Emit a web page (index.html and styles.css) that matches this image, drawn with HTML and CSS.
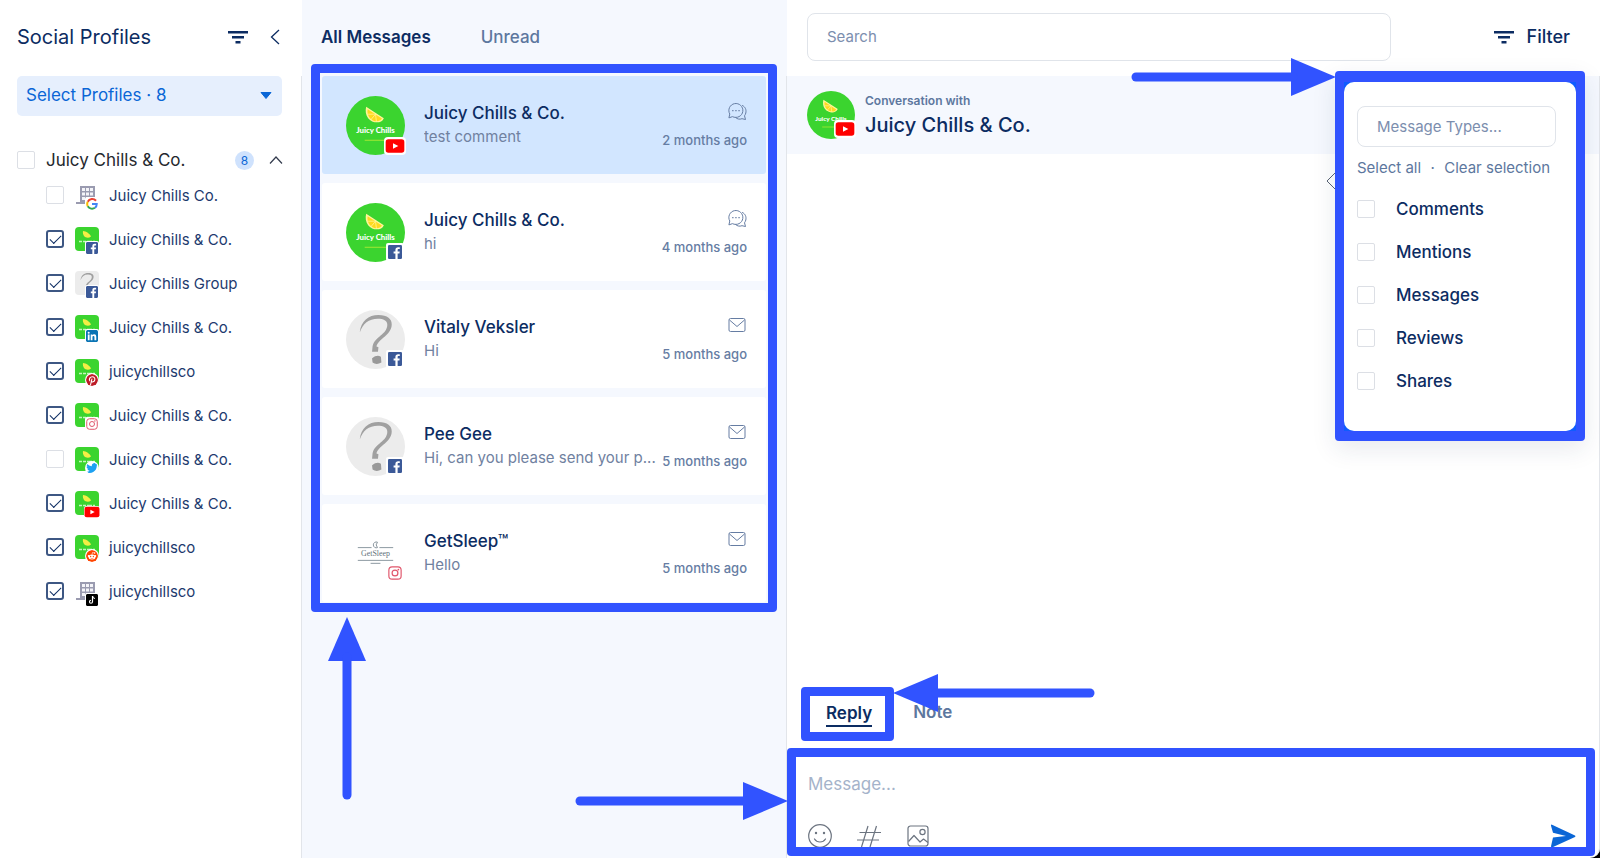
FILE: index.html
```html
<!DOCTYPE html>
<html lang="en">
<head>
<meta charset="utf-8">
<meta name="viewport" content="width=device-width, initial-scale=1">
<title>Social Inbox</title>
<link rel="stylesheet" href="styles.css">
</head>
<body>
<svg class="sprite" aria-hidden="true">
  <symbol id="filter" viewBox="0 0 20 14"><path d="M0 1h20v2.400H0zM4 6h12v2.400H4zM7.500 11h5v2.400h-5z" fill="currentColor"/></symbol>
  <symbol id="lime" viewBox="0 0 60 60">
    <rect width="60" height="60" fill="#3bd42f"/>
    <path d="M20.500 11L38.500 22.500C36 28.500 27 28 22.500 22.500 20 19.500 19.500 15 20.500 11z" fill="#fff59a"/>
    <path d="M22 13.500l14.500 9.500C34 27 27.500 26.500 24 22c-2-2.500-2.500-5.500-2-8.500z" fill="#ffd91f"/>
    <path d="M30 18.500l-8 0M30 18.500l-5 6M30 18.500l1 8" stroke="#fff59a" stroke-width=".8" fill="none"/>
  </symbol>
  <symbol id="lime-small" viewBox="0 0 24 24">
    <rect width="24" height="24" fill="#3bd42f"/>
    <path d="M8 4c3 0 7 3 8 5.500-2 1.800-5.500 1.500-7-.5-1-1.500-1.300-3.500-1-5z" fill="#f3ee45"/>
    <path d="M4 14.500h3m1 0h3m1 0h5m1 0h2" stroke="#c5f5bf" stroke-width="1.500"/>
  </symbol>
  <symbol id="unknown" viewBox="0 0 60 60">
    <rect width="60" height="60" fill="#ececec"/>
    <path d="M14 23C15 11 23 5 33 5c9 0 14 4 13.500 10C46 26 33 29 31 37l2 1-.5 4.500h-6L27 37C29 27 42 25 42 15c0-4-4-6-9.500-6C23 9 17 14 14 23z" fill="#a0a0a0"/>
    <path d="M26.500 49q5-4 9-1.500l.5 6q-5 3-9 0z" fill="#999"/>
  </symbol>
  <symbol id="building" viewBox="0 0 24 24">
    <path d="M5 3h15v18H8v-2H5zM1 19h8v2H1z" fill="#9a9bb0"/>
    <path d="M7 5h3v3H7zm4 0h3v3h-3zm4 0h3v3h-3zM7 9.500h3v3H7zm4 0h3v3h-3zm4 0h3v3h-3zM7 14h3v3H7zm4 0h3v3h-3zm4 0h3v3h-3z" fill="#f4f4f8"/>
  </symbol>
  <symbol id="google" viewBox="0 0 24 24">
    <path d="M20 5.500A10 10 0 0 0 3.500 7.500" fill="none" stroke="#ea4335" stroke-width="4"/>
    <path d="M3.500 7.500a10 10 0 0 0 0 9" fill="none" stroke="#fbbc05" stroke-width="4"/>
    <path d="M3.500 16.500a10 10 0 0 0 14.500 3" fill="none" stroke="#34a853" stroke-width="4"/>
    <path d="M12 12h9.500c0 3-1 5.500-3.500 7.500" fill="none" stroke="#4285f4" stroke-width="4"/>
  </symbol>
  <symbol id="facebook" viewBox="0 0 24 24">
    <rect width="24" height="24" rx="2" fill="#3b5998"/>
    <path d="M16.500 24v-9.300h3.100l.5-3.600h-3.600V8.800c0-1 .3-1.800 1.800-1.800h1.900V3.800c-.3 0-1.500-.1-2.800-.1-2.800 0-4.700 1.700-4.700 4.800v2.600H9.600v3.600h3.100V24z" fill="#fff"/>
  </symbol>
  <symbol id="linkedin" viewBox="0 0 24 24">
    <rect width="24" height="24" rx="3" fill="#0a74b4"/>
    <path d="M3.600 9h3.600v11.400H3.600zM5.400 3.400a2 2 0 1 1 0 4.100 2 2 0 0 1 0-4.100zM9.400 9h3.400v1.600c.6-1 1.800-1.900 3.500-1.900 3.600 0 4.200 2.400 4.200 5.500v6.200h-3.600v-5.500c0-1.400 0-3-1.900-3s-2.100 1.400-2.100 2.900v5.600H9.400z" fill="#fff"/>
  </symbol>
  <symbol id="pinterest" viewBox="0 0 24 24">
    <circle cx="12" cy="12" r="12" fill="#bd1c27"/>
    <path d="M9 22l2.800-12M7.500 13.500C5.500 10 8 5.500 12.500 5.500c4 0 6 3 5 6.500-1 4-5.500 5-6.800 2.500" fill="none" stroke="#fff" stroke-width="2.200" stroke-linecap="round"/>
  </symbol>
  <symbol id="instagram" viewBox="0 0 24 24">
    <g fill="none" stroke="#e0566b" stroke-width="2"><rect x="1.500" y="1.500" width="21" height="21" rx="5.500"/><circle cx="12" cy="12" r="5"/></g>
    <circle cx="17.800" cy="6.200" r="1.500" fill="#e0566b"/>
  </symbol>
  <symbol id="twitter" viewBox="0 0 24 24">
    <path d="M24 4.600a10 10 0 0 1-2.800.8 5 5 0 0 0 2.100-2.700 10 10 0 0 1-3.100 1.200 4.900 4.900 0 0 0-8.400 4.500A14 14 0 0 1 1.700 3.100a4.900 4.900 0 0 0 1.500 6.600 4.900 4.900 0 0 1-2.200-.6 4.900 4.900 0 0 0 3.900 4.900 5 5 0 0 1-2.200.1 4.900 4.900 0 0 0 4.600 3.400A9.900 9.900 0 0 1 0 19.500 14 14 0 0 0 21.500 7.100 10 10 0 0 0 24 4.600z" fill="#1da1f2"/>
  </symbol>
  <symbol id="youtube" viewBox="0 0 30 22">
    <rect x="1" y="1" width="28" height="20" rx="4" fill="#f00"/><path d="M12 7l8 4-8 4z" fill="#fff"/>
  </symbol>
  <symbol id="reddit" viewBox="0 0 24 24">
    <circle cx="12" cy="12" r="12" fill="#ff4500"/>
    <path d="M12 9l1-4 3.500.8" fill="none" stroke="#fff" stroke-width="1.200"/>
    <circle cx="17.200" cy="6" r="1.500" fill="#fff"/><circle cx="5.500" cy="12" r="2" fill="#fff"/><circle cx="18.500" cy="12" r="2" fill="#fff"/>
    <ellipse cx="12" cy="14" rx="7" ry="5" fill="#fff"/>
    <circle cx="9.300" cy="13" r="1.300" fill="#ff4500"/><circle cx="14.700" cy="13" r="1.300" fill="#ff4500"/>
    <path d="M9 16.300q3 1.800 6 0" fill="none" stroke="#ff4500"/>
  </symbol>
  <symbol id="tiktok" viewBox="0 0 24 24">
    <rect width="24" height="24" rx="2" fill="#000"/>
    <path d="M13 4v11.500a3 3 0 1 1-3-3" fill="none" stroke="#fff" stroke-width="2.400"/>
    <path d="M13 4c.3 3 2 4.700 5 5" fill="none" stroke="#fff" stroke-width="2.400"/>
  </symbol>
  <symbol id="comments" viewBox="0 0 20 20">
    <g fill="none" stroke="currentColor" stroke-linecap="round" stroke-linejoin="round">
      <path d="M2 16.500l.8-3.500a7 7 0 1 1 3 2.800z"/>
      <path d="M15.500 4.500c3 1.500 4 4.500 3.300 7.500-.2 1-.7 2-1.300 2.800l1 3.700-3.500-.8c-2.500 1-5 .3-6.500-1.200"/>
    </g>
    <path d="M5.200 9h1.300v1.200H5.200zm3.100 0h1.300v1.200H8.300zm3.100 0h1.300v1.200h-1.300z" fill="currentColor"/>
  </symbol>
  <symbol id="mail" viewBox="0 0 20 20">
    <g fill="none" stroke="currentColor" stroke-linejoin="round"><rect x="2" y="3.500" width="16" height="13" rx="1.500"/><path d="M2.500 5l7.500 6.500L17.500 5"/></g>
  </symbol>
</svg>

<div class="app">
  <aside class="sidebar">
    <header class="bar sidebar-bar">
      <h1 class="title">Social Profiles</h1>
      <button class="icon-btn" type="button" aria-label="Filter profiles"><svg width="20" height="14"><use href="#filter"/></svg></button>
      <button class="icon-btn" type="button" aria-label="Collapse"><svg width="10" height="16" viewBox="0 0 10 16"><path d="M9 1L1.500 8 9 15" fill="none" stroke="currentColor" stroke-width="1.300"/></svg></button>
    </header>
    <div class="sidebar-body">
      <div class="picker">
        <select class="picker-select" aria-label="Select profiles"><option>Select Profiles · 8</option></select>
        <svg class="picker-caret" width="12" height="7" viewBox="0 0 12 7" aria-hidden="true"><path d="M1 .5h10L6 6.500z" fill="#0a66d6" stroke="#0a66d6" stroke-linejoin="round"/></svg>
      </div>
      <div class="group">
        <label class="group-label"><input class="check" type="checkbox">Juicy Chills &amp; Co.</label>
        <span class="count">8</span>
        <button class="icon-btn" type="button" aria-label="Collapse group"><svg width="14" height="8" viewBox="0 0 14 8"><path d="M1 7.500L7 1l6 6.500" fill="none" stroke="#333b4d" stroke-width="1.200"/></svg></button>
      </div>
      <ul class="profiles">
        <li><label class="profile"><input class="check" type="checkbox"><span class="thumb"><svg class="thumb-img"><use href="#building"/></svg><svg class="net"><use href="#google"/></svg></span>Juicy Chills Co.</label></li>
        <li><label class="profile"><input class="check" type="checkbox" checked><span class="thumb"><svg class="thumb-img"><use href="#lime-small"/></svg><svg class="net"><use href="#facebook"/></svg></span>Juicy Chills &amp; Co.</label></li>
        <li><label class="profile"><input class="check" type="checkbox" checked><span class="thumb"><svg class="thumb-img"><use href="#unknown"/></svg><svg class="net"><use href="#facebook"/></svg></span>Juicy Chills Group</label></li>
        <li><label class="profile"><input class="check" type="checkbox" checked><span class="thumb"><svg class="thumb-img"><use href="#lime-small"/></svg><svg class="net"><use href="#linkedin"/></svg></span>Juicy Chills &amp; Co.</label></li>
        <li><label class="profile"><input class="check" type="checkbox" checked><span class="thumb"><svg class="thumb-img"><use href="#lime-small"/></svg><svg class="net round"><use href="#pinterest"/></svg></span>juicychillsco</label></li>
        <li><label class="profile"><input class="check" type="checkbox" checked><span class="thumb"><svg class="thumb-img"><use href="#lime-small"/></svg><svg class="net"><use href="#instagram"/></svg></span>Juicy Chills &amp; Co.</label></li>
        <li><label class="profile"><input class="check" type="checkbox"><span class="thumb"><svg class="thumb-img"><use href="#lime-small"/></svg><svg class="net round"><use href="#twitter"/></svg></span>Juicy Chills &amp; Co.</label></li>
        <li><label class="profile"><input class="check" type="checkbox" checked><span class="thumb"><svg class="thumb-img"><use href="#lime-small"/></svg><svg class="net wide"><use href="#youtube"/></svg></span>Juicy Chills &amp; Co.</label></li>
        <li><label class="profile"><input class="check" type="checkbox" checked><span class="thumb"><svg class="thumb-img"><use href="#lime-small"/></svg><svg class="net round"><use href="#reddit"/></svg></span>juicychillsco</label></li>
        <li><label class="profile"><input class="check" type="checkbox" checked><span class="thumb"><svg class="thumb-img"><use href="#building"/></svg><svg class="net"><use href="#tiktok"/></svg></span>juicychillsco</label></li>
      </ul>
    </div>
  </aside>

  <section class="inbox">
    <header class="bar inbox-bar">
      <button class="inbox-tab active" type="button">All Messages</button>
      <button class="inbox-tab" type="button">Unread</button>
    </header>
    <div class="inbox-body">
      <div class="threads">
        <button class="card selected" type="button">
          <span class="avatar"><svg class="avatar-img" viewBox="0 0 60 60"><use href="#lime"/><text class="logo-text" x="30" y="38">Juicy Chills</text><path d="M19 45h22" stroke="#a6e834"/></svg><svg class="net wide"><use href="#youtube"/></svg></span>
          <span class="card-text"><span class="name">Juicy Chills &amp; Co.</span><span class="snippet">test comment</span></span>
          <span class="meta"><svg width="20" height="20"><use href="#comments"/></svg><time>2 months ago</time></span>
        </button>
        <button class="card" type="button">
          <span class="avatar"><svg class="avatar-img" viewBox="0 0 60 60"><use href="#lime"/><text class="logo-text" x="30" y="38">Juicy Chills</text><path d="M19 45h22" stroke="#a6e834"/></svg><svg class="net"><use href="#facebook"/></svg></span>
          <span class="card-text"><span class="name">Juicy Chills &amp; Co.</span><span class="snippet">hi</span></span>
          <span class="meta"><svg width="20" height="20"><use href="#comments"/></svg><time>4 months ago</time></span>
        </button>
        <button class="card" type="button">
          <span class="avatar"><svg class="avatar-img"><use href="#unknown"/></svg><svg class="net"><use href="#facebook"/></svg></span>
          <span class="card-text"><span class="name">Vitaly Veksler</span><span class="snippet">Hi</span></span>
          <span class="meta"><svg width="20" height="20"><use href="#mail"/></svg><time>5 months ago</time></span>
        </button>
        <button class="card" type="button">
          <span class="avatar"><svg class="avatar-img"><use href="#unknown"/></svg><svg class="net"><use href="#facebook"/></svg></span>
          <span class="card-text"><span class="name">Pee Gee</span><span class="snippet">Hi, can you please send your p...</span></span>
          <span class="meta"><svg width="20" height="20"><use href="#mail"/></svg><time>5 months ago</time></span>
        </button>
        <button class="card" type="button">
          <span class="avatar"><svg class="avatar-img" viewBox="0 0 60 60"><path d="M12 24h14M34 24h14M12 37h36M25 40h10" stroke="#8b98a0"/><path d="M32 18.500a3 3 0 1 0 0 5.500 4 4 0 0 1 0-5.500z" fill="none" stroke="#6d7c86" stroke-width=".8"/><text class="sleep-text" x="30" y="33">GetSleep</text></svg><svg class="net"><use href="#instagram"/></svg></span>
          <span class="card-text"><span class="name">GetSleep™</span><span class="snippet">Hello</span></span>
          <span class="meta"><svg width="20" height="20"><use href="#mail"/></svg><time>5 months ago</time></span>
        </button>
        <span class="mark threads-mark"></span>
        <svg class="arrow arrow-threads" width="38" height="183" viewBox="0 0 38 183" aria-hidden="true"><path d="M19 0l19 44H0z" fill="#3153ff"/><path d="M19 40v138" stroke="#3153ff" stroke-width="9" stroke-linecap="round"/></svg>
      </div>
    </div>
  </section>

  <main class="conversation">
    <header class="bar conversation-bar">
      <input class="search" type="search" placeholder="Search" aria-label="Search">
      <div class="filter">
        <button class="filter-btn" type="button"><svg width="20" height="14" aria-hidden="true"><use href="#filter"/></svg>Filter</button>
        <form class="menu">
          <input class="menu-search" type="text" placeholder="Message Types..." aria-label="Message types">
          <div class="menu-links"><a href="#all">Select all</a><span>·</span><a href="#clear">Clear selection</a></div>
          <label class="option"><input class="check" type="checkbox">Comments</label>
          <label class="option"><input class="check" type="checkbox">Mentions</label>
          <label class="option"><input class="check" type="checkbox">Messages</label>
          <label class="option"><input class="check" type="checkbox">Reviews</label>
          <label class="option"><input class="check" type="checkbox">Shares</label>
          <svg class="arrow arrow-menu" width="205" height="38" viewBox="0 0 205 38" aria-hidden="true"><path d="M205 19l-45 19V0z" fill="#3153ff"/><path d="M5 19h157" stroke="#3153ff" stroke-width="9" stroke-linecap="round"/></svg>
        </form>
      </div>
    </header>
    <div class="conversation-body">
      <div class="who">
        <span class="avatar small"><svg class="avatar-img" viewBox="0 0 60 60"><use href="#lime"/><text class="logo-text" x="30" y="38">Juicy Chills</text><path d="M19 45h22" stroke="#a6e834"/></svg><svg class="net wide"><use href="#youtube"/></svg></span>
        <div><p class="who-hint">Conversation with</p><h2 class="who-name">Juicy Chills &amp; Co.</h2></div>
      </div>
      <div class="stream"><svg width="18" height="18" viewBox="0 0 18 18" aria-hidden="true"><path d="M9 1l8 8-8 8-8-8z" fill="none" stroke="#596273"/></svg></div>
      <div class="reply-tabs">
        <button class="reply-tab active" type="button"><span>Reply</span><span class="mark reply-mark"></span></button>
        <button class="reply-tab" type="button">Note</button>
        <svg class="arrow arrow-reply" width="202" height="38" viewBox="0 0 202 38" aria-hidden="true"><path d="M0 19L45 0v38z" fill="#3153ff"/><path d="M43 19h154" stroke="#3153ff" stroke-width="9" stroke-linecap="round"/></svg>
      </div>
      <form class="composer">
        <textarea class="message" rows="1" placeholder="Message..." aria-label="Message"></textarea>
        <div class="tools">
          <button class="icon-btn" type="button" aria-label="Emoji"><svg width="24" height="24" viewBox="0 0 24 24"><g fill="none" stroke="currentColor" stroke-width="1.200" stroke-linecap="round"><circle cx="12" cy="12" r="11.300"/><path d="M6.500 15c2.500 4 8.500 4 11 0"/></g><circle cx="8" cy="9" r="1.200" fill="currentColor"/><circle cx="16" cy="9" r="1.200" fill="currentColor"/></svg></button>
          <button class="icon-btn" type="button" aria-label="Hashtag"><svg width="24" height="24" viewBox="0 0 24 24"><path d="M11 2L4.500 23M19.500 2L13 23M2.500 8.500H24M0 16h22" fill="none" stroke="currentColor" stroke-width="1.200"/></svg></button>
          <button class="icon-btn" type="button" aria-label="Image"><svg width="24" height="24" viewBox="0 0 24 24"><g fill="none" stroke="currentColor" stroke-width="1.200" stroke-linejoin="round"><rect x="2" y="2" width="20" height="20" rx="2.500"/><circle cx="16.500" cy="8" r="2.600"/><path d="M2.500 17.500L8 11.500l6 6.500 3.500-3 4.500 3.500"/></g></svg></button>
          <button class="icon-btn send" type="submit" aria-label="Send"><svg width="26" height="24" viewBox="0 0 26 26" preserveAspectRatio="none"><path d="M1.500.5q-.8.500-.5 1.500l2 7.500L16 13 3 14.500 1 24q0 1.500 1.500 1.300L25 14q1-.8 0-1.500z" fill="#0a66d6"/></svg></button>
        </div>
        <span class="mark composer-mark"></span>
        <svg class="arrow arrow-composer" width="213" height="38" viewBox="0 0 213 38" aria-hidden="true"><path d="M213 19l-45 19V0z" fill="#3153ff"/><path d="M5 19h165" stroke="#3153ff" stroke-width="9" stroke-linecap="round"/></svg>
      </form>
    </div>
  </main>
</div>
</body>
</html>
```
FILE: styles.css
```css
* { box-sizing: border-box; }

body {
  margin: 0;
  font-family: Inter, "Open Sans", sans-serif;
  font-size: 15px;
  color: #0c2c62;
  background: #fff;
}

button, input, select, textarea { font: inherit; color: inherit; }
button { border: 0; padding: 0; background: none; text-align: left; cursor: pointer; }
svg { display: block; }
h1, h2, p, ul { margin: 0; padding: 0; }
ul { list-style: none; }

.sprite { position: absolute; width: 0; height: 0; }

.app {
  display: grid;
  grid-template-columns: 302px minmax(360px, 485px) minmax(0, 1fr);
  min-height: 100vh;
  background: #000;
}

.bar { display: flex; align-items: center; height: 76px; padding-bottom: 3px; }
.icon-btn { display: flex; align-items: center; justify-content: center; flex: none; }

.check {
  appearance: none;
  flex: none;
  display: grid;
  place-content: center;
  width: 18px;
  height: 18px;
  margin: 0;
  border: 1px solid #dcdfe5;
  border-radius: 2px;
  background: #fff;
}
.check:checked { border: 2px solid #3d5783; border-radius: 3px; }
.check:checked::before {
  content: "";
  width: 10px;
  height: 5px;
  margin-bottom: 3px;
  border-left: 1px solid #0c2c62;
  border-bottom: 1px solid #0c2c62;
  transform: rotate(-45deg);
}

/* Sidebar */
.sidebar { display: flex; flex-direction: column; background: #fff; }
.sidebar-bar { padding-left: 17px; padding-right: 22px; gap: 22px; }
.title { flex: 1; font-size: 20px; font-weight: 400; line-height: 28px; }
.sidebar-body { flex: 1; padding: 0 16px 0 17px; border-right: 1px solid #e2e5ea; }

.picker { position: relative; margin-right: 3px; }
.picker-select {
  appearance: none;
  display: block;
  width: 100%;
  height: 40px;
  padding: 0 32px 2px 9px;
  border: 0;
  border-radius: 5px;
  background: #e6effd;
  color: #0a66d6;
  font-size: 17px;
}
.picker-caret { position: absolute; right: 10px; top: 16px; pointer-events: none; }

.group { display: flex; align-items: center; gap: 15px; margin: 31px 2px 0 0; height: 26px; }
.group-label { display: flex; align-items: center; flex: 1; gap: 11px; font-size: 17px; color: #25282e; }
.count {
  width: 19px;
  border-radius: 10px;
  background: #cfe2fd;
  color: #0a66d6;
  font-size: 12px;
  line-height: 19px;
  text-align: center;
}

.profiles { padding-left: 29px; }
.profile { display: flex; align-items: center; height: 44px; font-size: 15px; color: #1d3a6e; }
.thumb { position: relative; flex: none; margin: 0 10px 0 11px; }
.thumb-img { width: 24px; height: 24px; border-radius: 4px; }

.net {
  position: absolute;
  right: 0;
  bottom: -4px;
  width: 14px;
  height: 14px;
  padding: 1px;
  border-radius: 2px;
  background: #fff;
}
.net.round { border-radius: 50%; }
.net.wide { right: -1px; bottom: -3px; width: 16px; height: 12px; padding: 0; border-radius: 3px; }

/* Inbox column */
.inbox { display: flex; flex-direction: column; background: #f5f8fe; }
.inbox-bar { padding-left: 19px; gap: 50px; }
.inbox-tab { font-size: 17px; font-weight: 500; line-height: 24px; color: #5d779e; }
.inbox-tab.active { font-weight: 600; color: #0c2c62; }
.inbox-body { flex: 1; padding: 0 20px; border-right: 1px solid #e2e5ea; }

.threads { position: relative; display: flex; flex-direction: column; gap: 9px; }
.card {
  display: flex;
  align-items: center;
  width: 100%;
  height: 98px;
  padding: 0 19px 0 24px;
  border-radius: 3px;
  background: #fff;
}
.card.selected { background: #d2e6ff; }
.avatar { position: relative; flex: none; width: 59px; height: 59px; }
.avatar-img { width: 100%; height: 100%; border-radius: 50%; }
.avatar .net { right: 1px; bottom: 1px; width: 18px; height: 18px; padding: 2px; }
.avatar .net.wide { right: -1px; bottom: 0; width: 22px; height: 18px; border-radius: 4px; padding: 1px; }
.logo-text { fill: #fff; font: 900 8px Lato, sans-serif; text-anchor: middle; }
.sleep-text { fill: #5f707a; font: 8px "Liberation Serif", serif; text-anchor: middle; }
.card-text { display: grid; flex: 1; min-width: 0; margin-left: 19px; }
.name { font-size: 17px; font-weight: 500; line-height: 24px; }
.snippet {
  overflow: hidden;
  color: #70819f;
  font-size: 15px;
  line-height: 24px;
  white-space: nowrap;
  text-overflow: ellipsis;
}
.meta {
  display: flex;
  flex-direction: column;
  align-items: flex-end;
  gap: 9px;
  margin-left: 2px;
  color: #667da3;
  font-size: 13px;
  font-weight: 500;
  line-height: 20px;
}

/* Conversation column */
.conversation { display: flex; flex-direction: column; border-radius: 0 0 10px 0; background: #fff; }
.conversation-bar { padding-left: 20px; padding-right: 30px; }
.search, .menu-search {
  min-width: 0;
  padding: 0 19px;
  border: 1px solid #e0e4ea;
  border-radius: 8px;
  outline: 0;
  background: #fff;
}
.search { flex: 1; height: 48px; margin-right: 103px; }
.search::placeholder, .menu-search::placeholder { color: #7c8eae; opacity: 1; }
.filter { position: relative; }
.filter-btn { display: flex; align-items: center; gap: 13px; font-size: 18px; font-weight: 500; line-height: 24px; }

/* The blue panel shows round the corners of the white sheet inside it */
.menu {
  position: absolute;
  z-index: 3;
  top: 46px;
  right: -15px;
  width: 250px;
  padding: 24px 20px 28px 13px;
  border: solid #3153ff;
  border-width: 11px 9px 10px;
  border-radius: 4px;
  background: #0f5cff;
  background-clip: padding-box;
  box-shadow: 0 8px 24px rgb(30 50 90 / 10%);
}
.menu::before {
  content: "";
  position: absolute;
  z-index: -1;
  inset: 0;
  border-radius: 10px;
  background: #fff;
}
.menu-search { display: block; width: 100%; height: 41px; }
.menu-links { display: flex; justify-content: space-between; margin: 9px 6px 8px 0; line-height: 24px; }
.menu-links, .menu-links a { color: #5d779e; text-decoration: none; }
.option { display: flex; align-items: center; gap: 21px; height: 43px; font-size: 17px; font-weight: 500; }

.conversation-body { flex: 1; display: flex; flex-direction: column; border-right: 1px solid #e2e5ea; border-radius: 0 0 10px 0; }
.who { display: flex; align-items: center; gap: 10px; height: 78px; padding-left: 20px; background: #f5f8fe; }
.avatar.small { width: 48px; height: 48px; }
.avatar.small .net.wide { bottom: 1px; }
.who-hint { color: #5d779e; font-size: 12px; font-weight: 600; line-height: 20px; }
.who-name { font-size: 20px; font-weight: 500; line-height: 28px; }
.stream { flex: 1; display: flex; justify-content: flex-end; padding: 18px 255px 0 0; }

.reply-tabs { position: relative; display: flex; margin: 0 0 7px 14px; height: 54px; }
.reply-tab { position: relative; padding: 0 20px 4px 19px; color: #5d779e; font-size: 17px; font-weight: 600; line-height: 24px; }
.reply-tab.active { padding-left: 25px; padding-right: 22px; color: #0c2c62; }
.reply-tab.active span:first-child { display: block; margin-top: 3px; border-bottom: 2px solid #0c2c62; }

.composer { position: relative; margin: 0 4px 3px 0; padding: 24px 19px 7px 21px; }
.message { display: block; width: 100%; height: 40px; padding: 0; border: 0; outline: 0; resize: none; background: none; font-size: 17px; line-height: 24px; }
.message::placeholder { color: #a5b3ca; opacity: 1; }
.tools { display: flex; align-items: center; gap: 25px; margin-top: 12px; color: #6c7480; }
.send { margin-left: auto; }

/* Highlight frames and pointers */
.mark { position: absolute; z-index: 2; border: 9px solid #3153ff; border-radius: 4px; pointer-events: none; }
.arrow { position: absolute; z-index: 4; pointer-events: none; }
.threads-mark { inset: -12px -11px -10px -11px; }
.reply-mark { inset: 0; }
.composer-mark { inset: 0 0 -1px; }
.arrow-threads { top: 541px; left: 6px; }
.arrow-menu { right: 240px; top: -24px; }
.arrow-reply { left: 92px; top: -13px; }
.arrow-composer { left: -212px; top: 34px; }
```
